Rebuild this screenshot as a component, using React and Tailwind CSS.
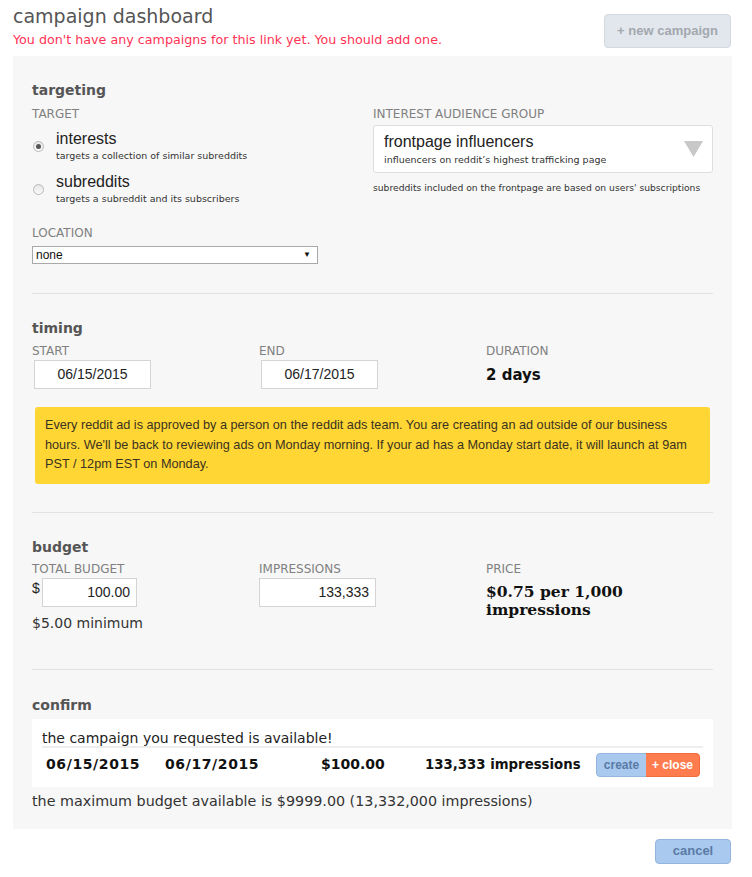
import React from 'react';

const verdana = { fontFamily: '"DejaVu Sans", Verdana, sans-serif' };

const Label = ({ children, className = '' }) => (
  <div className={`text-[12px] leading-[14px] uppercase text-[#808080] font-['DejaVu_Sans',sans-serif] ${className}`}>
    {children}
  </div>
);

const Heading = ({ children }) => (
  <h2 className="text-[14px] leading-[18px] font-bold text-[#555] font-['DejaVu_Sans',sans-serif]">{children}</h2>
);

const Radio = ({ checked }) => (
  <span className="w-[11px] h-[11px] rounded-full border border-[#b9b9b9] bg-gradient-to-b from-[#e6e6e6] to-[#fafafa] flex items-center justify-center shrink-0">
    {checked && <span className="w-[5px] h-[5px] rounded-full bg-[#555]" />}
  </span>
);

const TextBox = ({ value, align = 'center', width = 'w-[117px]' }) => (
  <div
    className={`${width} h-[29px] bg-white border border-[#d4d4d4] flex items-center px-[6px] text-[14px] text-[#222] font-['Liberation_Sans',Arial,sans-serif] ${
      align === 'right' ? 'justify-end' : 'justify-center'
    }`}
  >
    {value}
  </div>
);

export default function App() {
  return (
    <div className="w-[752px] min-h-[877px] bg-white text-[#333]" style={verdana}>
      {/* header */}
      <div className="flex justify-between pl-[13px] pr-[21px]">
        <div className="pt-[3px]">
          <h1 className="text-[19px] leading-[26px] text-[#555] font-normal">campaign dashboard</h1>
          <p className="text-[12.7px] leading-[16px] text-[#ff3355] mt-[3px]">
            You don't have any campaigns for this link yet. You should add one.
          </p>
        </div>
        <button className="mt-[14px] w-[127px] h-[34px] rounded-[4px] border border-[#d3d9e0] bg-[#e2e7ed] text-[#a3a8ae] text-[13px] font-bold font-['Liberation_Sans',Arial,sans-serif]">
          + new campaign
        </button>
      </div>

      {/* panel */}
      <div className="mx-[13px] mt-[8px] w-[719px] bg-[#f7f7f7] px-[19px] pt-[25px] pb-[19px]">
        {/* targeting */}
        <section className="pb-[29px] border-b border-[#e3e3e3]">
          <Heading>targeting</Heading>
          <div className="flex">
            <div className="w-[341px]">
              <Label className="mt-[8px]">Target</Label>
              <div className="mt-[9px] flex items-start gap-[12px] pl-[1px]">
                <div className="pt-[11px]"><Radio checked /></div>
                <div>
                  <div className="text-[16px] leading-[18px] text-[#222] font-['Liberation_Sans',Arial,sans-serif]">interests</div>
                  <div className="text-[9.5px] leading-[14px] text-[#333] mt-[1px]">targets a collection of similar subreddits</div>
                </div>
              </div>
              <div className="mt-[10px] flex items-start gap-[12px] pl-[1px]">
                <div className="pt-[11px]"><Radio /></div>
                <div>
                  <div className="text-[16px] leading-[18px] text-[#222] font-['Liberation_Sans',Arial,sans-serif]">subreddits</div>
                  <div className="text-[9.5px] leading-[14px] text-[#333] mt-[1px]">targets a subreddit and its subscribers</div>
                </div>
              </div>
              <Label className="mt-[20px]">Location</Label>
              <div className="mt-[6px] w-[286px] h-[18px] bg-white border border-[#a9a9a9] flex items-center justify-between pl-[3px] pr-[6px] text-[12px] text-[#111] font-['Liberation_Sans',Arial,sans-serif]">
                <span>none</span>
                <span className="text-[8px]">▼</span>
              </div>
            </div>
            <div className="flex-1">
              <Label className="mt-[8px]">Interest audience group</Label>
              <div className="mt-[4px] h-[48px] bg-white border border-[#dedede] rounded-[3px] flex items-center justify-between pl-[10px] pr-[9px]">
                <div>
                  <div className="text-[16px] leading-[18px] text-[#222] font-['Liberation_Sans',Arial,sans-serif]">frontpage influencers</div>
                  <div className="text-[9.5px] leading-[13px] text-[#333] mt-[2px]">influencers on reddit’s highest trafficking page</div>
                </div>
                <svg width="19" height="16" viewBox="0 0 19 16">
                  <polygon points="0,0 19,0 9.5,16" fill="#c8c8c8" />
                </svg>
              </div>
              <div className="mt-[8px] text-[9.2px] leading-[13px] text-[#333]">
                subreddits included on the frontpage are based on users' subscriptions
              </div>
            </div>
          </div>
        </section>

        {/* timing */}
        <section className="pt-[25px] pb-[28px] border-b border-[#e3e3e3]">
          <Heading>timing</Heading>
          <div className="grid grid-cols-[227px_227px_1fr] mt-[7px]">
            <div>
              <Label>Start</Label>
              <div className="mt-[2px] ml-[2px]"><TextBox value="06/15/2015" /></div>
            </div>
            <div>
              <Label>End</Label>
              <div className="mt-[2px] ml-[2px]"><TextBox value="06/17/2015" /></div>
            </div>
            <div>
              <Label>Duration</Label>
              <div className="mt-[8px] text-[15px] leading-[18px] font-bold text-[#111]">2 days</div>
            </div>
          </div>
          <div className="mt-[18px] mx-[3px] bg-[#ffd633] rounded-[3px] px-[10px] py-[9px] text-[12.7px] leading-[19.5px] text-[#3a3222] font-['Liberation_Sans',Arial,sans-serif]">
            Every reddit ad is approved by a person on the reddit ads team. You are creating an ad outside of our business hours. We'll be back to reviewing ads on Monday morning. If your ad has a Monday start date, it will launch at 9am PST / 12pm EST on Monday.
          </div>
        </section>

        {/* budget */}
        <section className="pt-[25px] pb-[37px] border-b border-[#e3e3e3]">
          <Heading>budget</Heading>
          <div className="grid grid-cols-[227px_227px_1fr] mt-[6px]">
            <div>
              <Label>Total budget</Label>
              <div className="mt-[2px] flex items-start">
                <span className="text-[14px] leading-[16px] text-[#222] w-[10px] mt-[2px] font-['Liberation_Sans',Arial,sans-serif]">$</span>
                <TextBox value="100.00" align="right" width="w-[95px]" />
              </div>
              <div className="mt-[7px] text-[14px] leading-[18px] text-[#333]">$5.00 minimum</div>
            </div>
            <div>
              <Label>Impressions</Label>
              <div className="mt-[2px]"><TextBox value="133,333" align="right" /></div>
            </div>
            <div>
              <Label>Price</Label>
              <div className="mt-[7px] text-[15.5px] leading-[18px] font-bold text-[#111] font-['DejaVu_Serif',serif]">
                $0.75 per 1,000<br />impressions
              </div>
            </div>
          </div>
        </section>

        {/* confirm */}
        <section className="pt-[26px]">
          <Heading>confirm</Heading>
          <div className="mt-[5px] bg-white px-[10px] pt-[11px] pb-[5px]">
            <div className="text-[14px] leading-[16px] text-[#222] border-b-2 border-[#eeeeee]">
              the campaign you requested is available!
            </div>
            <div className="flex items-center h-[34px] pl-[4px] text-[14px] font-bold text-[#111]">
              <span className="w-[119px] tracking-[0.6px]">06/15/2015</span>
              <span className="w-[156px] tracking-[0.6px]">06/17/2015</span>
              <span className="w-[104px]">$100.00</span>
              <span className="w-[171px] text-[13.3px]">133,333 impressions</span>
              <div className="flex h-[24px] rounded-[4px] overflow-hidden font-['Liberation_Sans',Arial,sans-serif] text-[12px] font-bold">
                <span className="w-[50px] flex items-center justify-center bg-[#a9c9ee] border border-r-0 border-[#94b6de] rounded-l-[4px] text-[#5a7aa6]">create</span>
                <span className="w-[54px] flex items-center justify-center bg-[#ff7c4f] border border-l-0 border-[#f36a3c] rounded-r-[4px] text-white">+ close</span>
              </div>
            </div>
          </div>
          <div className="mt-[5px] text-[14.3px] leading-[18px] text-[#333]">
            the maximum budget available is $9999.00 (13,332,000 impressions)
          </div>
        </section>
      </div>

      <div className="flex justify-end pr-[21px] mt-[10px]">
        <button className="w-[76px] h-[25px] rounded-[4px] border border-[#94b6de] bg-[#a9c9ee] text-[#5a7aa6] text-[13px] font-bold font-['Liberation_Sans',Arial,sans-serif]">
          cancel
        </button>
      </div>
    </div>
  );
}
